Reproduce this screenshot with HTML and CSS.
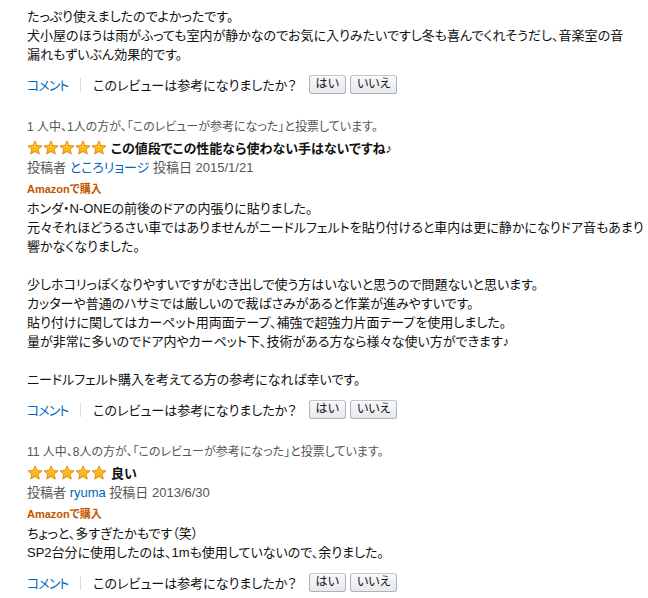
FILE: index.html
```html
<!DOCTYPE html>
<html lang="ja">
<head>
<meta charset="utf-8">
<link rel="stylesheet" href="styles.css">
</head>
<body>
<svg width="0" height="0" class="defs">
  <defs>
    <linearGradient id="sg" x1="0" y1="0" x2="0" y2="1">
      <stop offset="0" stop-color="#ffd03c"/>
      <stop offset="1" stop-color="#f9a800"/>
    </linearGradient>
    <symbol id="star" viewBox="-0.5 -0.5 17 16">
      <path d="M8 0.4 L10.12 5.29 L15.42 5.79 L11.42 9.31 L12.59 14.51 L8 11.8 L3.41 14.51 L4.58 9.31 L0.58 5.79 L5.88 5.29 Z" fill="url(#sg)" stroke="#d98200" stroke-width="0.9" stroke-linejoin="round"/>
    </symbol>
  </defs>
</svg>

<div class="review">
  <div class="body">たっぷり使えましたのでよかったです。<br>犬小屋のほうは雨がふっても室内が静かなのでお気に入りみたいですし冬も喜んでくれそうだし、音楽室の音<br>漏れもずいぶん効果的です。</div>
  <div class="actions">
    <a class="link">コメント</a><span class="sep"></span><span class="question">このレビューは参考になりましたか？</span><button class="btn">はい</button><button class="btn">いいえ</button>
  </div>
</div>

<div class="review">
  <div class="votes">1 人中、1人の方が、「このレビューが参考になった」と投票しています。</div>
  <div class="title-row">
    <span class="stars"><svg><use href="#star"/></svg><svg><use href="#star"/></svg><svg><use href="#star"/></svg><svg><use href="#star"/></svg><svg><use href="#star"/></svg></span>
    <span class="title">この値段でこの性能なら使わない手はないですね♪</span>
  </div>
  <div class="byline">投稿者 <a class="link">ところリョージ</a> 投稿日 2015/1/21</div>
  <div class="badge">Amazonで購入</div>
  <div class="body">ホンダ・N-ONEの前後のドアの内張りに貼りました。<br>元々それほどうるさい車ではありませんがニードルフェルトを貼り付けると車内は更に静かになりドア音もあまり<br>響かなくなりました。<br><br>少しホコリっぽくなりやすいですがむき出しで使う方はいないと思うので問題ないと思います。<br>カッターや普通のハサミでは厳しいので裁ばさみがあると作業が進みやすいです。<br>貼り付けに関してはカーペット用両面テープ、補強で超強力片面テープを使用しました。<br>量が非常に多いのでドア内やカーペット下、技術がある方なら様々な使い方ができます♪<br><br>ニードルフェルト購入を考えてる方の参考になれば幸いです。</div>
  <div class="actions">
    <a class="link">コメント</a><span class="sep"></span><span class="question">このレビューは参考になりましたか？</span><button class="btn">はい</button><button class="btn">いいえ</button>
  </div>
</div>

<div class="review">
  <div class="votes">11 人中、8人の方が、「このレビューが参考になった」と投票しています。</div>
  <div class="title-row">
    <span class="stars"><svg><use href="#star"/></svg><svg><use href="#star"/></svg><svg><use href="#star"/></svg><svg><use href="#star"/></svg><svg><use href="#star"/></svg></span>
    <span class="title">良い</span>
  </div>
  <div class="byline">投稿者 <a class="link">ryuma</a> 投稿日 2013/6/30</div>
  <div class="badge">Amazonで購入</div>
  <div class="body">ちょっと、多すぎたかもです（笑）<br>SP2台分に使用したのは、1mも使用していないので、余りました。</div>
  <div class="actions">
    <a class="link">コメント</a><span class="sep"></span><span class="question">このレビューは参考になりましたか？</span><button class="btn">はい</button><button class="btn">いいえ</button>
  </div>
</div>
</body>
</html>
```

FILE: styles.css
```css
html, body {
  margin: 0;
  background: #ffffff;
}
body {
  padding: 7px 0 0 27px;
  font-family: "Liberation Sans", "Noto Sans CJK JP", sans-serif;
  font-size: 13px;
  color: #111111;
  font-feature-settings: "palt";
  overflow: hidden;
}
.defs {
  position: absolute;
  width: 0;
  height: 0;
}
.review + .review {
  margin-top: 22px;
}
.votes {
  font-size: 12px;
  line-height: 20px;
  color: #555555;
  white-space: nowrap;
}
.title-row {
  display: flex;
  align-items: center;
  height: 21px;
}
.stars {
  display: flex;
  margin-right: 4px;
}
.stars svg {
  width: 16px;
  height: 15px;
  display: block;
}
.title {
  font-weight: bold;
  font-size: 13px;
  color: #111111;
  white-space: nowrap;
}
.byline {
  line-height: 20px;
  color: #555555;
  white-space: nowrap;
}
.link {
  color: #0066c0;
  text-decoration: none;
}
.badge {
  font-size: 11px;
  font-weight: bold;
  line-height: 19px;
  padding-top: 2px;
  color: #c45500;
}
.body {
  line-height: 19px;
  white-space: nowrap;
}
.actions {
  display: flex;
  align-items: center;
  height: 21px;
  margin-top: 10px;
  white-space: nowrap;
}
.actions .link {
  letter-spacing: -1px;
}
.sep {
  width: 1px;
  height: 14px;
  background: #dddddd;
  margin: 0 12px;
}
.question {
  margin-right: 12px;
}
.btn {
  font-family: "Liberation Sans", "Noto Sans CJK JP", sans-serif;
  font-feature-settings: "palt";
  font-size: 12px;
  color: #111111;
  height: 19px;
  padding: 0 6px;
  margin: 0 4px 0 0;
  border: 1px solid #adb1b8;
  border-top-color: #c2c5ca;
  border-radius: 3px;
  background: linear-gradient(#f7f8fa, #e7e9ec);
  line-height: 17px;
  box-shadow: 0 1px 0 rgba(255, 255, 255, 0.6) inset;
}
```
